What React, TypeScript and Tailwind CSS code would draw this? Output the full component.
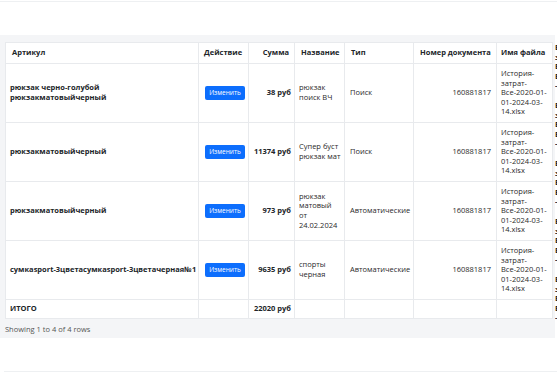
import React from "react";

interface Row {
  article: string[];
  sum: string;
  name: string[];
  type: string;
  doc: string;
}

const rows: Row[] = [
  { article: ["рюкзак черно-голубой", "рюкзакматовыйчерный"], sum: "38 руб", name: ["рюкзак", "поиск ВЧ"], type: "Поиск", doc: "160881817" },
  { article: ["рюкзакматовыйчерный"], sum: "11374 руб", name: ["Супер буст", "рюкзак мат"], type: "Поиск", doc: "160881817" },
  { article: ["рюкзакматовыйчерный"], sum: "973 руб", name: ["рюкзак", "матовый", "от", "24.02.2024"], type: "Автоматические", doc: "160881817" },
  { article: ["сумкаsport-3цветасумкаsport-3цветачерная№1"], sum: "9635 руб", name: ["спорты", "черная"], type: "Автоматические", doc: "160881817" },
];

const fileLines = ["История-", "затрат-", "Все-2020-01-", "01-2024-03-", "14.xlsx"];

const App: React.FC = () => {
  return (
    <div className="relative h-[373px] w-[557px] overflow-hidden bg-white font-['Open_Sans',sans-serif] text-[7.5px] leading-[9.6px] text-[#212529]">
      {/* faint frame lines of the page behind */}
      <div className="h-[2px] border-b border-[#eef0f2]" />

      {/* slivers of the page behind, cut by the window edges */}
      <div className="absolute left-[555px] top-[40px] w-[2px] overflow-hidden font-bold text-[#222]">
        {[0, 1, 2, 3, 4].map((i) => (
          <div key={i} className="h-[58px] pt-[3px] whitespace-nowrap">
            {["Б", "з", "Б", "Б", "-"].map((t, j) => (
              <div key={j}>{t}</div>
            ))}
          </div>
        ))}
      </div>
      <div className="absolute left-[-4px] top-[58px] w-[5px] overflow-hidden text-[#555]">
        {[0, 1, 2, 3].map((i) => (
          <div key={i} className="h-[72px] whitespace-nowrap">
            <div>с</div>
            <div>с</div>
          </div>
        ))}
      </div>

      <div className="mt-[33px] w-[555px] bg-[#f4f5f7] pl-[5px] pt-[7px] pb-[3px]">
        <table className="w-[547px] table-fixed border-collapse bg-white">
          <colgroup>
            <col className="w-[193px]" />
            <col className="w-[50px]" />
            <col className="w-[46px]" />
            <col className="w-[50px]" />
            <col className="w-[69px]" />
            <col className="w-[83px]" />
            <col className="w-[56px]" />
          </colgroup>
          <thead>
            <tr className="h-[21px] font-bold">
              <th className="border border-[#e8eaed] px-[6px] text-left">Артикул</th>
              <th className="border border-[#e8eaed] px-[5px] text-left">Действие</th>
              <th className="border border-[#e8eaed] px-[5px] text-right">Сумма</th>
              <th className="border border-[#e8eaed] px-[6px] text-left">Название</th>
              <th className="border border-[#e8eaed] px-[6px] text-left">Тип</th>
              <th className="border border-[#e8eaed] px-[6px] text-right whitespace-nowrap">Номер документа</th>
              <th className="border border-[#e8eaed] px-[4px] text-left whitespace-nowrap">Имя файла</th>
            </tr>
          </thead>
          <tbody>
            {rows.map((r, i) => (
              <tr key={i} className={i < 2 ? "h-[59px]" : "h-[58px]"}>
                <td className="border border-[#e8eaed] pl-[4px] pr-0 font-bold whitespace-nowrap">
                  {r.article.map((l) => (
                    <div key={l}>{l}</div>
                  ))}
                </td>
                <td className="border border-[#e8eaed] px-[6px]">
                  <button className="flex h-[14px] w-[40px] items-center justify-center rounded-[2px] bg-[#0d6efd] text-[6.5px] text-white">
                    Изменить
                  </button>
                </td>
                <td className="border border-[#e8eaed] px-[3px] text-right font-bold whitespace-nowrap">{r.sum}</td>
                <td className="border border-[#e8eaed] pl-[4px] pr-0 text-[#2a2a2a] whitespace-nowrap">
                  {r.name.map((l) => (
                    <div key={l}>{l}</div>
                  ))}
                </td>
                <td className="border border-[#e8eaed] px-[5px] text-[#2a2a2a]">{r.type}</td>
                <td className="border border-[#e8eaed] px-[5px] text-right text-[#2a2a2a]">{r.doc}</td>
                <td className="border border-[#e8eaed] px-[4px] py-[5px] text-[#2a2a2a] whitespace-nowrap">
                  {fileLines.map((l) => (
                    <div key={l}>{l}</div>
                  ))}
                </td>
              </tr>
            ))}
            <tr className="h-[19px] font-bold">
              <td className="border border-[#e8eaed] px-[4px]">ИТОГО</td>
              <td className="border border-[#e8eaed]" />
              <td className="border border-[#e8eaed] px-[3px] text-right whitespace-nowrap">22020 руб</td>
              <td className="border border-[#e8eaed]" />
              <td className="border border-[#e8eaed]" />
              <td className="border border-[#e8eaed]" />
              <td className="border border-[#e8eaed]" />
            </tr>
          </tbody>
        </table>
        <div className="mt-[6px] text-[7.5px] text-[#555]">Showing 1 to 4 of 4 rows</div>
      </div>

      <div className="absolute bottom-0 left-[4px] right-0 h-[2px] border-t border-[#eef0f2]" />
    </div>
  );
};

export default App;
